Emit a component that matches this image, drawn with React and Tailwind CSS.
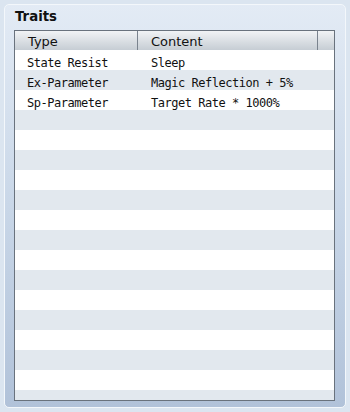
import React from "react";

const rows = [
  ["State Resist", "Sleep"],
  ["Ex-Parameter", "Magic Reflection + 5%"],
  ["Sp-Parameter", "Target Rate * 1000%"],
];

export default function App() {
  const all = Array.from({ length: 18 }, (_, i) => rows[i] || ["", ""]);
  return (
    <div className="w-[350px] h-[412px] bg-[#dbe5f0] p-[4px] overflow-hidden">
      <div className="h-full rounded-[5px] border border-[#f3f7fb] bg-gradient-to-b from-[#e3ebf5] via-[#c9d7e8] to-[#b1c2d9] pl-[9px] pr-[10px] flex flex-col">
        <div
          className="h-[25px] pt-[5px] pl-[1px] text-[13.3px] leading-[14px] font-bold text-[#111]"
          style={{ fontFamily: '"DejaVu Sans", sans-serif' }}
        >
          Traits
        </div>
        <div className="w-[321px] h-[371px] border border-[#69727d] bg-white overflow-hidden">
          <div
            className="flex h-[19px] bg-gradient-to-b from-[#f1f3f5] to-[#c6cdd4] text-[13px] leading-[14px] text-[#111]"
            style={{ fontFamily: '"DejaVu Sans", sans-serif' }}
          >
            <div className="w-[123px] border-r border-[#7a838e] pl-[13px] pt-[4px]">Type</div>
            <div className="w-[180px] border-r border-[#7a838e] pl-[13px] pt-[4px]">Content</div>
            <div className="flex-1" />
          </div>
          {all.map((r, i) => (
            <div
              key={i}
              className={`flex h-[20px] text-[12px] tracking-[-0.47px] leading-[14px] text-[#111] ${
                i % 2 === 1 ? "bg-[#e2e8ee]" : "bg-white"
              }`}
              style={{ fontFamily: '"DejaVu Sans Mono", monospace' }}
            >
              <div className="w-[123px] pl-[12px] pt-[5.5px] whitespace-pre">{r[0]}</div>
              <div className="w-[180px] pl-[13px] pt-[5.5px] whitespace-pre">{r[1]}</div>
            </div>
          ))}
        </div>
      </div>
    </div>
  );
}
